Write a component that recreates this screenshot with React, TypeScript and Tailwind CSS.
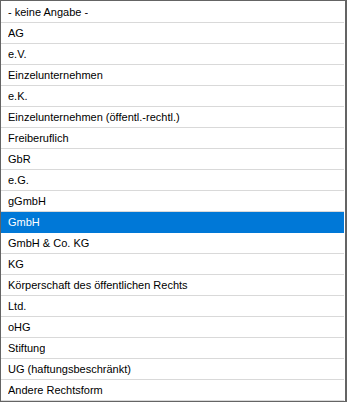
const ITEMS = [
  "- keine Angabe -",
  "AG",
  "e.V.",
  "Einzelunternehmen",
  "e.K.",
  "Einzelunternehmen (öffentl.-rechtl.)",
  "Freiberuflich",
  "GbR",
  "e.G.",
  "gGmbH",
  "GmbH",
  "GmbH & Co. KG",
  "KG",
  "Körperschaft des öffentlichen Rechts",
  "Ltd.",
  "oHG",
  "Stiftung",
  "UG (haftungsbeschränkt)",
  "Andere Rechtsform",
];

const SELECTED = "GmbH";

export default function App() {
  return (
    <div
      className="w-[347px] h-[402px] bg-white border-l border-t border-r-2 border-b border-[#646464] pt-px pr-px overflow-hidden"
      style={{ fontFamily: '"Liberation Sans", Arial, sans-serif' }}
    >
      {ITEMS.map((item) => {
        const active = item === SELECTED;
        return (
          <div
            key={item}
            className={
              active
                ? "h-[21px] flex items-center pl-[7px] pt-px text-[11px] bg-[#0078d7] text-white border-b border-[#0078d7]"
                : "h-[21px] flex items-center pl-[7px] pt-px text-[11px] text-black border-b border-[#d9d9d9]"
            }
          >
            <span className="truncate">{item}</span>
          </div>
        );
      })}
    </div>
  );
}
